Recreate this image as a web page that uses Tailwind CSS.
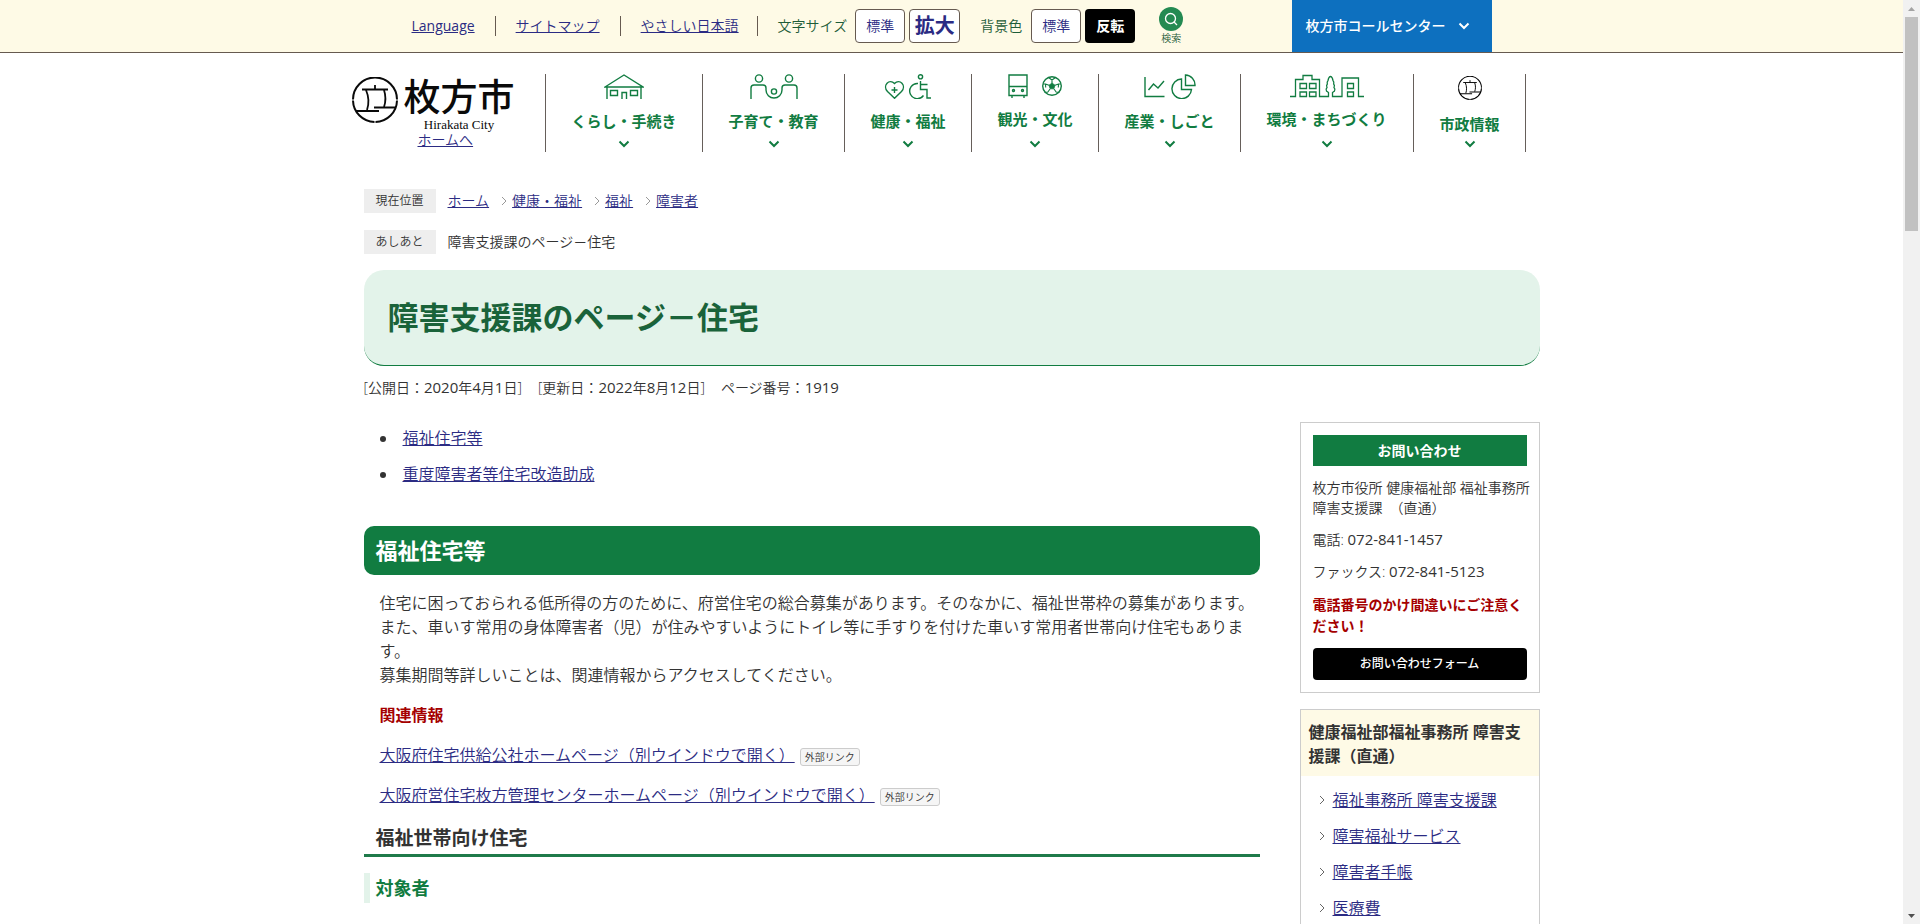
<!DOCTYPE html>
<html lang="ja">
<head>
<meta charset="utf-8">
<meta name="viewport" content="width=device-width, initial-scale=1">
<title>障害支援課のページ－住宅 | 枚方市</title>
<script src="https://cdn.jsdelivr.net/npm/@tailwindcss/browser@4"></script>
</head>
<body class="flex h-screen overflow-hidden bg-white font-['Open_Sans','Noto_Sans_CJK_JP',sans-serif] text-base font-[350] text-[#333]">

<svg class="hidden" aria-hidden="true">
  <symbol id="down" viewBox="0 0 12 8"><path d="M1.500 1.500 6 6l4.500-4.500" fill="none" stroke="currentColor" stroke-width="2"/></symbol>
  <symbol id="right" viewBox="0 0 6 10"><path d="M1 1l4 4-4 4" fill="none" stroke="currentColor"/></symbol>
  <symbol id="emblem" viewBox="0 0 46 46">
    <g fill="none" stroke="currentColor" stroke-width="2">
      <path d="M1 22.500A22 22 0 0 1 45 22.500M1 23.500A22 22 0 0 0 22.500 45M45 23.500A22 22 0 0 1 23.500 45"/>
      <path d="M10 12.500h26M23 8v4.500M14 13c3 7 3 14 1 20M32 13c2 6 2 11 0 17" stroke-width="1.800"/>
      <path d="M4 34h23M22 30.500h22"/>
    </g>
  </symbol>
</svg>

<div class="min-w-0 flex-1">
  <!-- utility bar -->
  <div class="h-[53px] border-b border-[#665a50] bg-[#fefae6]">
    <div class="mx-auto flex h-[52px] w-full max-w-[1176px] items-center pl-[48px] text-sm">
      <ul class="flex h-5 items-center leading-5">
        <li class="border-r border-[#665a50] pr-5"><a href="#" class="font-normal text-[#2b2b83] underline">Language</a></li>
        <li class="border-r border-[#665a50] px-5"><a href="#" class="text-[#2b2b83] underline">サイトマップ</a></li>
        <li class="border-r border-[#665a50] pr-[18px] pl-5"><a href="#" class="text-[#2b2b83] underline">やさしい日本語</a></li>
      </ul>
      <span class="ml-5 text-[#1d5c38]">文字サイズ</span>
      <button class="ml-2 h-[34px] w-[50px] rounded border border-[#665a50] bg-white text-[#2b2b83]">標準</button>
      <button class="ml-1 h-[34px] w-[51px] rounded border border-[#665a50] bg-white text-xl leading-5 font-bold text-[#2b2b83]">拡大</button>
      <span class="ml-5 text-[#1d5c38]">背景色</span>
      <button class="ml-[9px] h-[34px] w-[50px] rounded border border-[#665a50] bg-white text-[#2b2b83]">標準</button>
      <button class="ml-1 h-[34px] w-[50px] rounded bg-black font-bold text-white">反転</button>
      <button class="ml-[23px] flex w-[26px] flex-col items-center text-[10px] leading-[14px] text-[#1d5c38]">
        <svg class="size-6" viewBox="0 0 24 24"><circle cx="12" cy="12" r="12" fill="#248a52"/><circle cx="11.500" cy="11.500" r="5" fill="none" stroke="#fff" stroke-width="1.300"/><path d="m15 15 3 3" stroke="#fff" stroke-width="1.300"/></svg>
        検索
      </button>
      <button class="mr-[48px] ml-auto flex h-[52px] w-[200px] items-center bg-[#0d70bf] pl-[14px] font-medium text-white">枚方市コールセンター<svg class="ml-3 h-2 w-3"><use href="#down"/></svg></button>
    </div>
  </div>

  <!-- logo and main navigation -->
  <header class="mx-auto flex w-full max-w-[1200px] pt-[21px]">
    <div class="flex w-[193px] shrink-0 flex-col">
      <a href="#" class="flex h-[58px] text-[#0a0a0a]">
        <svg class="mt-[3px] size-[46px]"><use href="#emblem"/></svg>
        <span class="ml-[6px] flex flex-col items-center">
          <span class="text-[37px] leading-[45px] font-medium whitespace-nowrap">枚方市</span>
          <span class="font-['Liberation_Serif',serif] text-[13px] leading-3 font-normal whitespace-nowrap">Hirakata City</span>
        </span>
      </a>
      <a href="#" class="ml-[66px] self-start text-sm leading-4 text-[#2b2b83] underline">ホームへ</a>
    </div>
    <nav class="text-[15px] leading-6 font-bold text-[#117c41]">
      <ul class="flex h-[78px]">
        <li class="border-x border-[#665f5a] pr-[25px] pl-[26px]">
          <a href="#" class="flex h-full flex-col items-center whitespace-nowrap">
            <svg class="mb-[10px] h-[25px] w-[40px]" viewBox="0 0 40 25" fill="none" stroke="currentColor" stroke-width="1.400"><path d="M1 13 20 1l19 12zM3 13v12M37 13v12M6.500 16.500h7v5h-7zM26.500 16.500h7v5h-7zM18 25v-6.500h4.500V25"/></svg>
            くらし・手続き
            <svg class="mt-auto mb-1 h-2 w-3"><use href="#down"/></svg>
          </a>
        </li>
        <li class="border-r border-[#665f5a] pr-[25px] pl-[26px]">
          <a href="#" class="flex h-full flex-col items-center whitespace-nowrap">
            <svg class="mb-[10px] h-[25px] w-[48px]" viewBox="0 0 48 25" fill="none" stroke="currentColor" stroke-width="1.400"><circle cx="9" cy="4.500" r="3.600"/><circle cx="39" cy="4.500" r="3.600"/><circle cx="24" cy="17.500" r="2.600"/><path d="M1 25V14q0-3 3-3h9q3 0 3 3v2a8 8 0 0 0 16 0v-2q0-3 3-3h9q3 0 3 3v11"/></svg>
            子育て・教育
            <svg class="mt-auto mb-1 h-2 w-3"><use href="#down"/></svg>
          </a>
        </li>
        <li class="border-r border-[#665f5a] pr-[25px] pl-[26px]">
          <a href="#" class="flex h-full flex-col items-center whitespace-nowrap">
            <svg class="mb-[10px] h-[25px] w-[48px]" viewBox="0 0 48 25" fill="none" stroke="currentColor" stroke-width="1.400"><path d="M10.500 24.300 3.500 17.500C-2 11.500 5.500 4 10.500 9.500 15.500 4 23 11.500 17.500 17.500zM10.500 13v6M7.500 16h6"/><circle cx="36.500" cy="2.800" r="2.100"/><path d="M36.500 7v8.500H43v8.500h4M36.500 10.500h7M34 9.500a7.600 7.600 0 1 0 5.500 12"/></svg>
            健康・福祉
            <svg class="mt-auto mb-1 h-2 w-3"><use href="#down"/></svg>
          </a>
        </li>
        <li class="border-r border-[#665f5a] pr-[25px] pl-[26px]">
          <a href="#" class="flex h-full flex-col items-center whitespace-nowrap">
            <svg class="mb-2 h-[25px] w-[54px]" viewBox="0 0 54 25" fill="none" stroke="currentColor" stroke-width="1.400"><path d="M1 1h18v20.500H1zM1 12.500h18M4 21.500V24M16 21.500V24"/><circle cx="5.500" cy="16.500" r="1"/><circle cx="14.500" cy="16.500" r="1"/><circle cx="44" cy="12" r="9.300"/><path d="m44 9 3 2.300-1.200 3.500h-3.600L41 11.300z" fill="currentColor" stroke-width=".8"/><path d="M44 9V6M47 11.300l3.500-1.300M46 15l2.300 3.200M42 15l-2.300 3.200M41 11.300 37.500 10M40.500 3.500 44 6l3.500-2.500M53 10l-2.500 0-.2 3.500M48.300 18.200h3.200M39.700 18.200h-3.200M35 10h2.500l.2 3.500" stroke-width="1.100"/></svg>
            観光・文化
            <svg class="mt-auto mb-1 h-2 w-3"><use href="#down"/></svg>
          </a>
        </li>
        <li class="border-r border-[#665f5a] pr-[25px] pl-[26px]">
          <a href="#" class="flex h-full flex-col items-center whitespace-nowrap">
            <svg class="mb-[10px] h-[25px] w-[52px]" viewBox="0 0 52 25" fill="none" stroke="currentColor" stroke-width="1.400"><path d="M1 3v19.500h19.500M4.500 16l5-6 4.500 4 6-7"/><path d="M37.500 5A9.800 9.800 0 1 0 47.500 15.500h-10zM41.500 1v10.500H51A10 10 0 0 0 41.500 1z"/></svg>
            産業・しごと
            <svg class="mt-auto mb-1 h-2 w-3"><use href="#down"/></svg>
          </a>
        </li>
        <li class="border-r border-[#665f5a] px-[26px]">
          <a href="#" class="flex h-full flex-col items-center whitespace-nowrap">
            <svg class="mb-2 h-[25px] w-[74px]" viewBox="0 0 74 25" fill="none" stroke="currentColor" stroke-width="1.300"><path d="M0 22.500h5.500V5.500H13V1.500h9v4h7.500v17H38.500V18.500l-2-1.500q-1-2 .5-3.500-1-2 .3-3.500-.5-2 .7-3.500.8-4 2.500-4t2.500 4q1.200 1.500.7 3.500 1.300 1.500.3 3.500 1.500 1.500.5 3.500l-2 1.500v4H52V4h16.500v18.500H74M10 9.500h6.500v5H10zM19.500 9.500H26v5h-6.500zM10 22.500v-4.500h6.500v4.500zM19.500 22.500v-4.500H26v4.500zM57.500 9.500h6v5h-6zM57.500 22.500v-4.500h6v4.500z"/></svg>
            環境・まちづくり
            <svg class="mt-auto mb-1 h-2 w-3"><use href="#down"/></svg>
          </a>
        </li>
        <li class="border-r border-[#665f5a] pr-[25px] pl-[26px]">
          <a href="#" class="flex h-full flex-col items-center whitespace-nowrap">
            <svg class="mt-[2px] mb-3 size-6 text-black"><use href="#emblem"/></svg>
            市政情報
            <svg class="mt-auto mb-1 h-2 w-3"><use href="#down"/></svg>
          </a>
        </li>
      </ul>
    </nav>
  </header>

  <main class="mx-auto w-full max-w-[1176px] pt-[37px]">
    <nav class="flex h-6 items-center text-sm" aria-label="現在位置">
      <span class="w-[72px] bg-[#eee] text-center text-xs leading-6">現在位置</span>
      <ol class="ml-3 flex items-center text-[#2b2b83] underline">
        <li><a href="#">ホーム</a></li>
        <li class="flex items-center"><svg class="mr-[5px] ml-3 h-[10px] w-[6px] text-[#999]"><use href="#right"/></svg><a href="#">健康・福祉</a></li>
        <li class="flex items-center"><svg class="mr-[5px] ml-3 h-[10px] w-[6px] text-[#999]"><use href="#right"/></svg><a href="#">福祉</a></li>
        <li class="flex items-center"><svg class="mr-[5px] ml-3 h-[10px] w-[6px] text-[#999]"><use href="#right"/></svg><a href="#">障害者</a></li>
      </ol>
    </nav>
    <div class="mt-[17px] flex h-6 items-center text-sm">
      <span class="w-[72px] bg-[#eee] text-center text-xs leading-6">あしあと</span>
      <span class="ml-3">障害支援課のページ－住宅</span>
    </div>

    <h1 class="mt-4 rounded-[20px] border-b border-[#117c41] bg-[#e3f3ea] px-6 py-6 text-[31px] leading-[47px] font-bold text-[#1a633a]">障害支援課のページ－住宅</h1>
    <p class="mt-[11px] flex gap-4 text-sm leading-[22px]"><span>[公開日：<span class="text-[15px] leading-4 font-normal">2020</span>年<span class="text-[15px] leading-4 font-normal">4</span>月<span class="text-[15px] leading-4 font-normal">1</span>日]</span><span>[更新日：<span class="text-[15px] leading-4 font-normal">2022</span>年<span class="text-[15px] leading-4 font-normal">8</span>月<span class="text-[15px] leading-4 font-normal">12</span>日]</span><span>ページ番号：<span class="text-[15px] leading-4 font-normal">1919</span></span></p>

    <div class="mt-[23px] flex items-start justify-between gap-10">
      <article class="min-w-0 max-w-[896px] flex-1">
        <ul class="ml-[34px] list-disc space-y-3 pt-1 text-base leading-6">
          <li class="pl-[5px]"><a href="#s1" class="text-[#2b2b83] underline">福祉住宅等</a></li>
          <li class="pl-[5px]"><a href="#s2" class="text-[#2b2b83] underline">重度障害者等住宅改造助成</a></li>
        </ul>
        <h2 id="s1" class="mt-10 rounded-[10px] bg-[#117c41] px-3 text-[22px] leading-[49px] font-bold text-white">福祉住宅等</h2>
        <div class="mt-4 ml-4 leading-6">
          <p>住宅に困っておられる低所得の方のために、府営住宅の総合募集があります。そのなかに、福祉世帯枠の募集があります。<br>また、車いす常用の身体障害者（児）が住みやすいようにトイレ等に手すりを付けた車いす常用者世帯向け住宅もあります。<br>募集期間等詳しいことは、関連情報からアクセスしてください。</p>
          <p class="mt-4 font-bold text-[#a50000]">関連情報</p>
          <p class="mt-4 flex items-center gap-[5px]"><a href="#" class="text-[#2b2b83] underline">大阪府住宅供給公社ホームページ（別ウインドウで開く）</a><span class="mt-1 rounded-[3px] border border-[#ccc] bg-[#f5f5f5] px-1 text-[10px] leading-4">外部リンク</span></p>
          <p class="mt-4 flex items-center gap-[5px]"><a href="#" class="text-[#2b2b83] underline">大阪府営住宅枚方管理センターホームページ（別ウインドウで開く）</a><span class="mt-1 rounded-[3px] border border-[#ccc] bg-[#f5f5f5] px-1 text-[10px] leading-4">外部リンク</span></p>
        </div>
        <h3 class="mt-4 border-b-3 border-[#1f7a4a] px-3 pb-px text-[19px] leading-[30px] font-bold">福祉世帯向け住宅</h3>
        <h4 class="mt-4 border-l-6 border-[#e3f3ea] pl-[6px] text-lg leading-[30px] font-bold text-[#117c41]">対象者</h4>
      </article>

      <aside class="w-[240px] shrink-0">
        <section class="border border-[#ccc] p-3 text-sm leading-5">
          <h2 class="bg-[#117c41] text-center leading-[31px] font-bold text-white">お問い合わせ</h2>
          <p class="mt-3 whitespace-nowrap">枚方市役所 健康福祉部 福祉事務所<br>障害支援課　（直通）</p>
          <p class="mt-3">電話: <span class="text-[15px] leading-4 font-normal">072-841-1457</span></p>
          <p class="mt-3">ファックス: <span class="text-[15px] leading-4 font-normal">072-841-5123</span></p>
          <p class="mt-3 leading-[21px] font-bold text-[#a50000]">電話番号のかけ間違いにご注意ください！</p>
          <button class="mt-3 block h-8 w-full rounded bg-black text-xs font-medium text-white">お問い合わせフォーム</button>
        </section>
        <section class="mt-4 border border-[#ccc]">
          <h2 class="bg-[#fefae6] px-2 pt-[10px] pb-2 leading-6 font-bold">健康福祉部福祉事務所 障害支援課（直通）</h2>
          <ul class="space-y-3 py-3 pl-[18px] leading-6">
            <li class="flex items-center gap-2"><svg class="h-[10px] w-[6px] text-[#666]"><use href="#right"/></svg><a href="#" class="text-[#2b2b83] underline">福祉事務所 障害支援課</a></li>
            <li class="flex items-center gap-2"><svg class="h-[10px] w-[6px] text-[#666]"><use href="#right"/></svg><a href="#" class="text-[#2b2b83] underline">障害福祉サービス</a></li>
            <li class="flex items-center gap-2"><svg class="h-[10px] w-[6px] text-[#666]"><use href="#right"/></svg><a href="#" class="text-[#2b2b83] underline">障害者手帳</a></li>
            <li class="flex items-center gap-2"><svg class="h-[10px] w-[6px] text-[#666]"><use href="#right"/></svg><a href="#" class="text-[#2b2b83] underline">医療費</a></li>
          </ul>
        </section>
      </aside>
    </div>
  </main>
</div>

<!-- scroll bar -->
<div class="flex w-[17px] shrink-0 flex-col items-center bg-[#f1f1f1]" aria-hidden="true">
  <svg class="size-[17px]" viewBox="0 0 17 17"><path d="M5 11h7L8.500 7z" fill="#a3a3a3"/></svg>
  <div class="h-[214px] w-[13px] bg-[#c1c1c1]"></div>
  <svg class="mt-auto size-[17px]" viewBox="0 0 17 17"><path d="M5 7h7l-3.500 4z" fill="#505050"/></svg>
</div>
</body>
</html>
